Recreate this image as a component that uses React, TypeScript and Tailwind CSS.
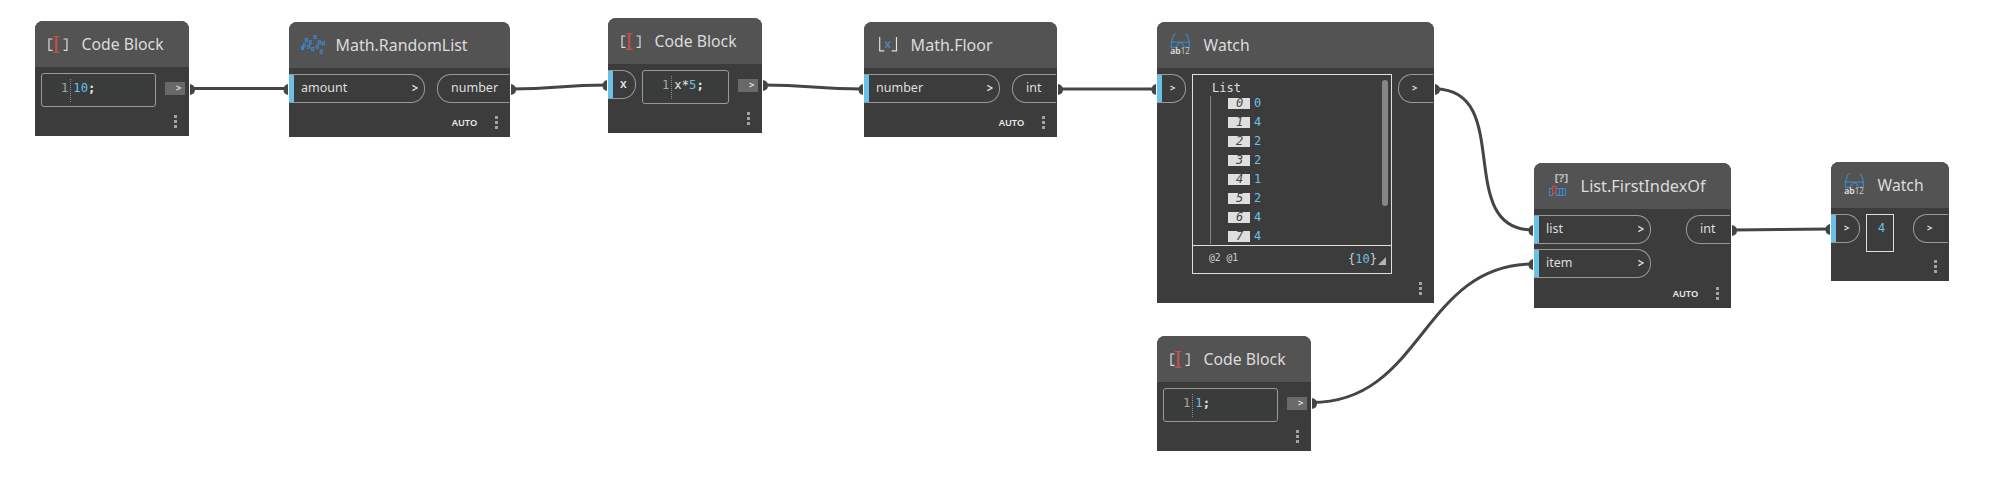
import type { ReactNode } from "react";

const titleFont = "font-['Noto_Sans',sans-serif]";
const mono = "font-['DejaVu_Sans_Mono',monospace]";

function CodeIcon() {
  return (
    <svg width="22" height="18" viewBox="0 0 22 18" fill="none">
      <path d="M5.5 4H2V15.4H5.5M16.5 4H20V15.4H16.5" stroke="#dcdcdc" strokeWidth="1.2" />
      <path d="M6 1.5H12.7M6 17.4H12.7" stroke="#c0504d" strokeWidth="1.2" />
      <path d="M9.3 1V17.5" stroke="#c0504d" strokeWidth="2.3" />
    </svg>
  );
}

function RandomIcon() {
  const dots = [
    [0, 11], [1.8, 8.3], [3.8, 3], [6.2, 9.7], [7.8, 5.3], [10.2, 12], [12.5, 0], [14.8, 9.7], [16.8, 5.3], [20.8, 6.3], [18.8, 14.7],
  ];
  return (
    <svg width="25" height="20" viewBox="0 0 25 20" fill="none">
      {dots.map(([x, y], i) => (
        <rect key={i} x={x + 0.5} y={y + 0.5} width="2" height="3" stroke="#3d87cd" strokeWidth="1.1" />
      ))}
    </svg>
  );
}

function FloorIcon() {
  return (
    <svg width="20" height="18" viewBox="0 0 20 18" fill="none">
      <path d="M1.7 1V14.8H6.3M18.5 1V14.8H13.7" stroke="#e0e0e0" strokeWidth="1.2" />
      <path d="M7.2 5.5L12 12M12 5.5L7.2 12" stroke="#5585b0" strokeWidth="1.4" />
    </svg>
  );
}

function WatchIcon() {
  return (
    <svg width="22" height="24" viewBox="0 0 22 24" fill="none">
      <path d="M5.5 1H4.7Q3.6 1.2 3 3.6L1.4 8.8V14.4H5.5L9.6 9.6H11.2L15 14.4H19.4V8.8L17.8 3.6Q17.2 1.2 16.2 1H15.4M1 9.2H20" stroke="#4284c0" strokeWidth="1.2" />
      <text x="0.2" y="21" fill="#e4e4e4" fontSize="9.4" className="font-['Noto_Sans',sans-serif] font-semibold" textLength="10.4" lengthAdjust="spacingAndGlyphs">ab</text>
      <text x="10.8" y="21" fill="#c8c8c8" fontSize="8" className="font-['Noto_Sans',sans-serif]" textLength="9" lengthAdjust="spacingAndGlyphs">12</text>
    </svg>
  );
}

function IndexIcon() {
  return (
    <svg width="22" height="26" viewBox="0 0 22 26" fill="none">
      <text x="5.5" y="9" fill="#c4c4c4" fontSize="11" className="font-['Noto_Sans',sans-serif] font-semibold" textLength="14" lengthAdjust="spacingAndGlyphs">[?]</text>
      <path d="M3.5 15.5H.5V22.5H3.5V20M7 15.5H16.5V22.5H7.5V20M10.5 15V23M13.5 15V23" stroke="#3d87cd" strokeWidth="1.2" />
      <path d="M3.7 13.3H6.9V20.2H3.7Z" stroke="#c0504d" strokeWidth="1.2" />
    </svg>
  );
}

function Dots({ className = "" }: { className?: string }) {
  return (
    <div className={`flex flex-col gap-[2px] ${className}`}>
      <i className="size-[3px] bg-[#a3a3a3]" />
      <i className="size-[3px] bg-[#a3a3a3]" />
      <i className="size-[3px] bg-[#a3a3a3]" />
    </div>
  );
}

function Node({ place, iconPad, gap, icon, title, titleWidth, children }: {
  place: string; iconPad: string; gap: string; icon: ReactNode; title: string; titleWidth: number; children: ReactNode;
}) {
  return (
    <section className={`absolute flex flex-col overflow-hidden rounded-t-[8px] bg-[#3c3c3c] ${place}`}>
      <header className={`flex h-[46px] shrink-0 bg-[#535353] ${iconPad} ${gap}`}>
        <span className="flex w-[25px] shrink-0 items-center">{icon}</span>
        <svg width={titleWidth + 4} height="46" className="shrink-0 overflow-visible">
          <text x="-0.4" y="29" fontSize="16.8" fill="#dcdcdc" textLength={titleWidth + 1} lengthAdjust="spacingAndGlyphs" className={titleFont}>{title}</text>
        </svg>
      </header>
      {children}
    </section>
  );
}

function Chevron({ small = false, className = "" }: { small?: boolean; className?: string }) {
  return (
    <svg width="6" height="8" viewBox="0 0 6 8" fill="none" className={`-mt-[1px] shrink-0 ${className}`}>
      <path d={small ? "M.4 1.9L4.6 4L.4 6.1" : "M.3 1.4L5.2 4L.3 6.6"} stroke="#dfdfdf" strokeWidth={small ? 1.1 : 1.3} />
    </svg>
  );
}

function InPort({ label, width }: { label?: string; width: string }) {
  return (
    <div className={`flex h-[29px] shrink-0 items-center rounded-r-[14px] border border-l-0 border-[#999] pr-[6px] text-[12.5px] text-[#dfdfdf] ${titleFont} ${width}`}>
      <i className="h-full w-[5px] shrink-0 bg-[#6ac0e7]" />
      {label && <span className="ml-[7px] -mt-px">{label}</span>}
      <Chevron small={!label} className={label ? "ml-auto" : "ml-[8px]"} />
    </div>
  );
}

function OutPort({ label, width }: { label?: string; width: string }) {
  return (
    <div className={`mr-px flex h-[29px] shrink-0 items-center rounded-l-[14px] border border-r-0 border-[#999] pl-[13px] text-[12.5px] text-[#dfdfdf] ${titleFont} ${width}`}>
      {label ? <span className="-mt-px">{label}</span> : <Chevron small />}
    </div>
  );
}

function CodeField({ width, children }: { width: string; children: ReactNode }) {
  return (
    <div className={`flex h-[34px] shrink-0 rounded-[3px] border border-[#999] bg-[#3a3c3b] pl-[19px] pt-[5px] text-[12.2px] leading-[18px] text-[#e6e6e6] ${mono} ${width}`}>
      <span className="text-[#a5a5a5]">1</span>
      <i className="ml-[2px] mr-[2px] h-[23px] w-0 border-l border-dotted border-[#8a8a8a]" />
      {children}
      <b>;</b>
    </div>
  );
}

function CodeOut() {
  return (
    <div className="flex h-[13px] w-5 shrink-0 items-center justify-end bg-[#696969] pr-[3px]">
      <Chevron small />
    </div>
  );
}

function CodeBlock({ place, value }: { place: string; value: string }) {
  return (
    <Node place={place} iconPad="pl-[12px]" gap="gap-[10px]" icon={<CodeIcon />} title="Code Block" titleWidth={81}>
      <div className="flex gap-[9px] pl-[6px] pt-[6px]">
        <CodeField width="w-[115px]">
          <span className="text-[#6ac0e7]">{value}</span>
        </CodeField>
        <div className="pt-[9px]"><CodeOut /></div>
      </div>
      <Dots className="ml-[139px] mt-[8px]" />
    </Node>
  );
}

function Footer() {
  return (
    <div className="flex justify-end gap-[18px] pr-[12px] pt-[13px]">
      <svg width="26" height="15" className="overflow-visible">
        <text x="0.7" y="10" fontSize="9.6" fill="#e8e8e8" textLength="25.5" lengthAdjust="spacingAndGlyphs" className={`font-semibold ${titleFont}`}>AUTO</text>
      </svg>
      <Dots />
    </div>
  );
}

function Wires() {
  const ends: [number, number, boolean][] = [
    [190, 89, true], [288, 89, false], [511, 89, true], [607, 85, false], [763, 85, true], [863, 89, false],
    [1058, 89, true], [1156, 89, false], [1435, 89, true], [1533, 230, false], [1312, 403, true], [1533, 264, false],
    [1732, 230, true], [1830, 229, false],
  ];
  return (
    <svg className="absolute left-0 top-0" width="1998" height="496" fill="none">
      <g stroke="#454545" strokeWidth="3">
        <path d="M190 88.5H288" />
        <path d="M511 89C560 89 558 85 607 85" />
        <path d="M763 85C813 85 813 89 863 89" />
        <path d="M1058 89H1156" />
        <path d="M1435 89C1515 89 1453 230 1533 230" />
        <path d="M1312 402.5C1423 402.5 1422 264 1533 264" />
        <path d="M1732 230C1780 230 1780 229 1830 229" />
      </g>
      {ends.map(([x, y, out], i) => (
        <path key={i} fill="#454545" d={out ? `M${x} ${y - 5}Q${x + 5} ${y - 4} ${x + 5} ${y + 0.5}Q${x + 5} ${y + 5} ${x} ${y + 6}Z` : `M${x} ${y - 5}Q${x - 4.5} ${y - 4} ${x - 4.5} ${y + 0.5}Q${x - 4.5} ${y + 5} ${x} ${y + 6}Z`} />
      ))}
    </svg>
  );
}

export default function App() {
  return (
    <main className="relative h-[496px] w-[1998px] overflow-hidden bg-white">
      <Wires />
      <CodeBlock place="left-[35px] top-[21px] h-[115px] w-[154px]" value="10" />

      <Node place="left-[289px] top-[22px] h-[115px] w-[221px]" iconPad="pl-[12px]" gap="gap-[10px]" icon={<RandomIcon />} title="Math.RandomList" titleWidth={131}>
        <div className="flex justify-between pt-[6px]">
          <InPort label="amount" width="w-[136px]" />
          <OutPort label="number" width="w-[72px]" />
        </div>
        <Footer />
      </Node>

      <Node place="left-[608px] top-[18px] h-[115px] w-[154px]" iconPad="pl-[12px]" gap="gap-[10px]" icon={<CodeIcon />} title="Code Block" titleWidth={81}>
        <div className="flex pt-[6px]">
          <div className={`flex h-[29px] w-[28px] items-center rounded-r-[14px] border border-l-0 border-[#999] text-[12px] text-[#dfdfdf] ${titleFont}`}>
            <i className="h-full w-[5px] bg-[#6ac0e7]" />
            <span className="-mt-[2px] ml-[7px] font-semibold">x</span>
          </div>
          <div className="ml-[6px]">
            <CodeField width="w-[87px]">x*<span className="text-[#6ac0e7]">5</span></CodeField>
          </div>
          <div className="ml-[9px] pt-[9px]"><CodeOut /></div>
        </div>
        <Dots className="ml-[139px] mt-[8px]" />
      </Node>

      <Node place="left-[864px] top-[22px] h-[115px] w-[193px]" iconPad="pl-[14px]" gap="gap-[8px]" icon={<FloorIcon />} title="Math.Floor" titleWidth={81}>
        <div className="flex justify-between pt-[6px]">
          <InPort label="number" width="w-[136px]" />
          <OutPort label="int" width="w-[44px]" />
        </div>
        <Footer />
      </Node>

      <Node place="left-[1157px] top-[22px] h-[281px] w-[277px]" iconPad="pl-[13px]" gap="gap-[9px]" icon={<WatchIcon />} title="Watch" titleWidth={45}>
        <div className="flex pt-[6px]">
          <InPort width="w-[29px]" />
          <div className={`ml-[6px] flex h-[200px] w-[200px] flex-col border border-[#dfdfdf] text-[12px] ${mono}`}>
            <div className="flex h-[171px] shrink-0 overflow-hidden border-b border-[#dfdfdf]">
              <div className="flex flex-1 flex-col pl-[17px]">
                <span className="h-[21px] pl-[2px] pt-[4px] leading-[18px] text-[#dfdfdf]">List</span>
                <div className="flex flex-col gap-[8px] border-l border-[#858585] pb-[2px] pl-[17px] pt-[2px]">
                  {[0, 4, 2, 2, 1, 2, 4, 4].map((v, i) => (
                    <div key={i} className="flex h-[11px] shrink-0 gap-[4px] leading-[11px]">
                      <i className="w-[22px] bg-[#dfdfdf] pl-[8px] text-[#454545]">{i}</i>
                      <span className="text-[#6ac0e7]">{v}</span>
                    </div>
                  ))}
                </div>
              </div>
              <i className="mr-[3px] mt-[5px] h-[126px] w-[6px] rounded-full bg-[#858585]" />
            </div>
            <div className="flex h-[27px] items-center pb-[2px] pl-[16px] text-[#cfcfcf]">
              <span className="text-[9.7px]">@2 @1</span>
              <span className="ml-auto">{"{"}<span className="text-[#6ac0e7]">10</span>{"}"}</span>
              <svg width="8" height="8" className="ml-px mr-[5px] mt-[4px]"><path d="M8 0V8H0Z" fill="#b4b4b4" /></svg>
            </div>
          </div>
          <div className="ml-[6px]"><OutPort width="w-[35px]" /></div>
        </div>
        <Dots className="ml-[262px] mt-[8px]" />
      </Node>

      <CodeBlock place="left-[1157px] top-[336px] h-[115px] w-[154px]" value="1" />

      <Node place="left-[1534px] top-[163px] h-[145px] w-[197px]" iconPad="pl-[15px]" gap="gap-[7px]" icon={<IndexIcon />} title="List.FirstIndexOf" titleWidth={124}>
        <div className="flex justify-between pt-[6px]">
          <div className="flex flex-col gap-[5px]">
            <InPort label="list" width="w-[117px]" />
            <InPort label="item" width="w-[117px]" />
          </div>
          <OutPort label="int" width="w-[44px]" />
        </div>
        <div className="-mt-[4px]"><Footer /></div>
      </Node>

      <Node place="left-[1831px] top-[162px] h-[119px] w-[118px]" iconPad="pl-[13px]" gap="gap-[9px]" icon={<WatchIcon />} title="Watch" titleWidth={45}>
        <div className="flex pt-[6px]">
          <InPort width="w-[29px]" />
          <div className={`ml-[6px] h-[38px] w-[28px] border border-[#dfdfdf] pl-[11px] pt-[4px] text-[12px] leading-[18px] text-[#6ac0e7] ${mono}`}>4</div>
          <div className="ml-[19px]"><OutPort width="w-[35px]" /></div>
        </div>
        <Dots className="ml-[103px] mt-[8px]" />
      </Node>
    </main>
  );
}
